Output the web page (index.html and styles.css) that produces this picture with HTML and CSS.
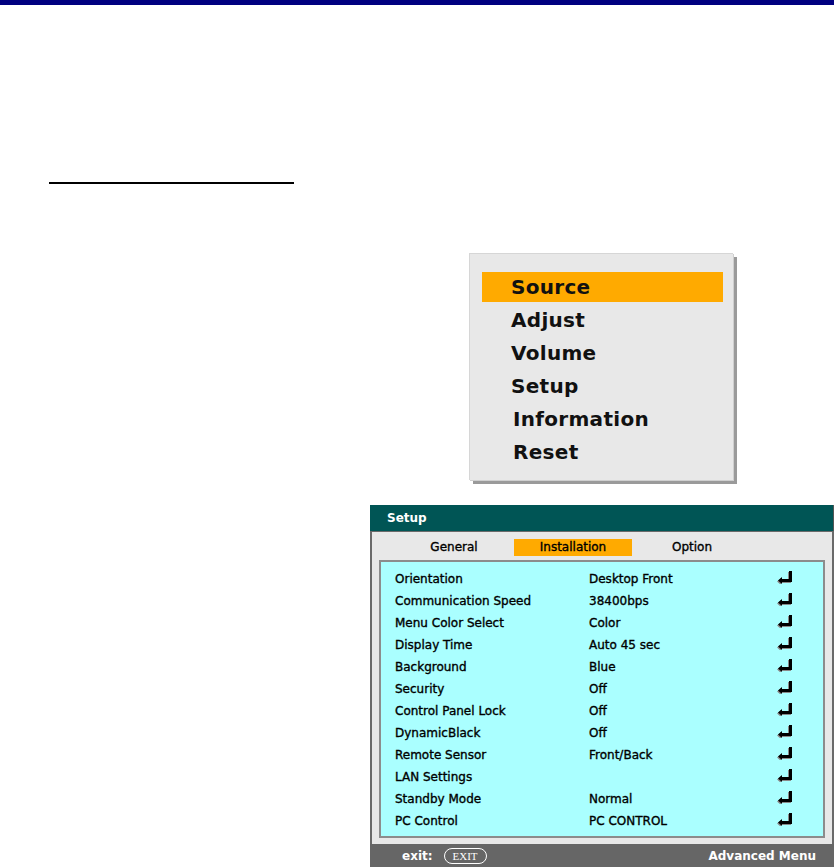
FILE: index.html
```html
<!DOCTYPE html>
<html>
<head>
<meta charset="utf-8">
<link rel="stylesheet" href="styles.css">
</head>
<body>
<div class="topbar"></div>
<div class="rule"></div>

<div class="menu">
  <div class="item active">Source</div>
  <div class="item">Adjust</div>
  <div class="item">Volume</div>
  <div class="item">Setup</div>
  <div class="item shift">Information</div>
  <div class="item shift">Reset</div>
</div>

<div class="panel">
  <div class="ptitle">Setup</div>
  <div class="pbody">
    <div class="tabs">
      <div class="tab">General</div>
      <div class="tab on">Installation</div>
      <div class="tab">Option</div>
    </div>
    <div class="list">
      <div class="row"><span class="lab">Orientation</span><span class="val">Desktop Front</span><span class="ent"><svg width="17" height="13" viewBox="0 0 17 13"><path d="M12 1h3v11H5v2L1 10.5 5 7v2h7z" fill="#8a8a8a"/><path d="M13 0h3v11H6v2L2 9.5 6 6v2h7z" fill="#000"/></svg></span></div>
      <div class="row"><span class="lab">Communication Speed</span><span class="val">38400bps</span><span class="ent"><svg width="17" height="13" viewBox="0 0 17 13"><path d="M12 1h3v11H5v2L1 10.5 5 7v2h7z" fill="#8a8a8a"/><path d="M13 0h3v11H6v2L2 9.5 6 6v2h7z" fill="#000"/></svg></span></div>
      <div class="row"><span class="lab">Menu Color Select</span><span class="val">Color</span><span class="ent"><svg width="17" height="13" viewBox="0 0 17 13"><path d="M12 1h3v11H5v2L1 10.5 5 7v2h7z" fill="#8a8a8a"/><path d="M13 0h3v11H6v2L2 9.5 6 6v2h7z" fill="#000"/></svg></span></div>
      <div class="row"><span class="lab">Display Time</span><span class="val">Auto 45 sec</span><span class="ent"><svg width="17" height="13" viewBox="0 0 17 13"><path d="M12 1h3v11H5v2L1 10.5 5 7v2h7z" fill="#8a8a8a"/><path d="M13 0h3v11H6v2L2 9.5 6 6v2h7z" fill="#000"/></svg></span></div>
      <div class="row"><span class="lab">Background</span><span class="val">Blue</span><span class="ent"><svg width="17" height="13" viewBox="0 0 17 13"><path d="M12 1h3v11H5v2L1 10.5 5 7v2h7z" fill="#8a8a8a"/><path d="M13 0h3v11H6v2L2 9.5 6 6v2h7z" fill="#000"/></svg></span></div>
      <div class="row"><span class="lab">Security</span><span class="val">Off</span><span class="ent"><svg width="17" height="13" viewBox="0 0 17 13"><path d="M12 1h3v11H5v2L1 10.5 5 7v2h7z" fill="#8a8a8a"/><path d="M13 0h3v11H6v2L2 9.5 6 6v2h7z" fill="#000"/></svg></span></div>
      <div class="row"><span class="lab">Control Panel Lock</span><span class="val">Off</span><span class="ent"><svg width="17" height="13" viewBox="0 0 17 13"><path d="M12 1h3v11H5v2L1 10.5 5 7v2h7z" fill="#8a8a8a"/><path d="M13 0h3v11H6v2L2 9.5 6 6v2h7z" fill="#000"/></svg></span></div>
      <div class="row"><span class="lab">DynamicBlack</span><span class="val">Off</span><span class="ent"><svg width="17" height="13" viewBox="0 0 17 13"><path d="M12 1h3v11H5v2L1 10.5 5 7v2h7z" fill="#8a8a8a"/><path d="M13 0h3v11H6v2L2 9.5 6 6v2h7z" fill="#000"/></svg></span></div>
      <div class="row"><span class="lab">Remote Sensor</span><span class="val">Front/Back</span><span class="ent"><svg width="17" height="13" viewBox="0 0 17 13"><path d="M12 1h3v11H5v2L1 10.5 5 7v2h7z" fill="#8a8a8a"/><path d="M13 0h3v11H6v2L2 9.5 6 6v2h7z" fill="#000"/></svg></span></div>
      <div class="row"><span class="lab">LAN Settings</span><span class="val"></span><span class="ent"><svg width="17" height="13" viewBox="0 0 17 13"><path d="M12 1h3v11H5v2L1 10.5 5 7v2h7z" fill="#8a8a8a"/><path d="M13 0h3v11H6v2L2 9.5 6 6v2h7z" fill="#000"/></svg></span></div>
      <div class="row"><span class="lab">Standby Mode</span><span class="val">Normal</span><span class="ent"><svg width="17" height="13" viewBox="0 0 17 13"><path d="M12 1h3v11H5v2L1 10.5 5 7v2h7z" fill="#8a8a8a"/><path d="M13 0h3v11H6v2L2 9.5 6 6v2h7z" fill="#000"/></svg></span></div>
      <div class="row"><span class="lab">PC Control</span><span class="val">PC CONTROL</span><span class="ent"><svg width="17" height="13" viewBox="0 0 17 13"><path d="M12 1h3v11H5v2L1 10.5 5 7v2h7z" fill="#8a8a8a"/><path d="M13 0h3v11H6v2L2 9.5 6 6v2h7z" fill="#000"/></svg></span></div>
    </div>
  </div>
  <div class="pfoot">
    <span class="exit">exit:</span>
    <span class="pill">EXIT</span>
    <span class="adv">Advanced Menu</span>
  </div>
</div>
</body>
</html>
```
FILE: styles.css
```css
html, body {
  margin: 0;
  padding: 0;
  background: #ffffff;
  font-family: "DejaVu Sans", "Liberation Sans", sans-serif;
}

.topbar {
  height: 5px;
  background: #000080;
}

.rule {
  margin-left: 49px;
  margin-top: 177px;
  width: 245px;
  height: 2px;
  background: #000000;
}

.menu {
  margin-left: 469px;
  margin-top: 69px;
  width: 264px;
  box-sizing: border-box;
  padding: 18px 10px 10px 12px;
  background: #e8e8e8;
  border-top: 1px solid #d6d6d6;
  border-left: 1px solid #d6d6d6;
  box-shadow: 1px 1px 0 #cfcfcf, 4px 4px 0 #9a9a9a;
}

.item {
  height: 30px;
  line-height: 30px;
  margin-bottom: 3px;
  padding-left: 29px;
  font-size: 20px;
  font-weight: bold;
  color: #111;
  letter-spacing: 0.3px;
}

.item.shift { padding-left: 31px; }

.item.active { background: #ffaa00; }

.panel {
  margin-left: 370px;
  margin-top: 25px;
  width: 464px;
  font-size: 12px;
}

.ptitle {
  height: 26px;
  line-height: 26px;
  background: #005555;
  color: #ffffff;
  font-weight: bold;
  padding-left: 17px;
  border-right: 1px solid #555;
}

.pbody {
  background: #e8e8e8;
  border-left: 2px solid #6a6a6a;
  border-right: 2px solid #6a6a6a;
  border-top: 1px solid #6a6a6a;
  padding: 7px 7px 6px 7px;
}

.tabs {
  display: flex;
  gap: 1px;
  margin-left: 16px;
  margin-bottom: 4px;
}

.tab {
  width: 118px;
  height: 17px;
  line-height: 17px;
  text-align: center;
  color: #000;
  -webkit-text-stroke: 0.35px #000;
}

.tab.on { background: #ffaa00; }

.list {
  background: #aaffff;
  border: 2px solid #8c8c8c;
  padding: 6px 0 4px 14px;
}

.row {
  display: flex;
  align-items: center;
  height: 22px;
  color: #000;
  -webkit-text-stroke: 0.35px #000;
}

.lab { width: 194px; }
.val { width: 187px; }
.ent { display: flex; margin-top: -3px; }
.ent svg { display: block; }

.pfoot {
  height: 24px;
  background: #666666;
  display: flex;
  align-items: center;
  padding-left: 32px;
  padding-right: 18px;
  color: #ffffff;
  font-weight: bold;
}

.exit { margin-right: 11px; }

.pill {
  border: 1.5px solid #ffffff;
  border-radius: 9px;
  height: 14px;
  line-height: 14px;
  width: 41px;
  text-align: center;
  font-family: "Liberation Serif", serif;
  font-weight: normal;
  font-size: 11px;
}

.adv { margin-left: auto; }
```
